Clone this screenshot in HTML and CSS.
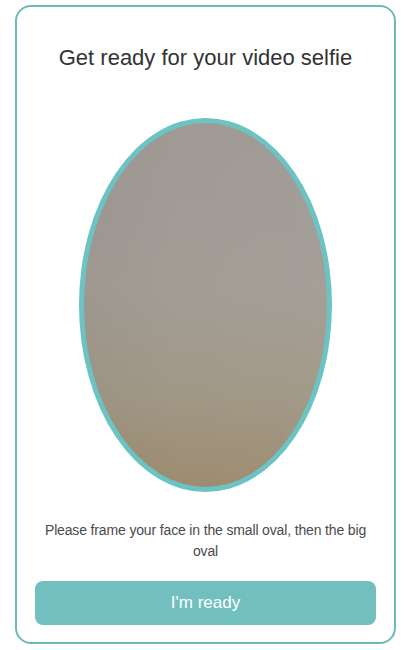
FILE: index.html
```html
<!DOCTYPE html>
<html lang="en">
<head>
<meta charset="utf-8">
<title>Video selfie</title>
<link rel="stylesheet" href="styles.css">
</head>
<body>
<main class="card">
  <h1 class="title">Get ready for your video selfie</h1>
  <div class="oval" aria-hidden="true"></div>
  <p class="hint">Please frame your face in the small oval, then the big oval</p>
  <button class="ready" type="button">I'm ready</button>
</main>
</body>
</html>
```

FILE: styles.css
```css
html, body {
  margin: 0;
  padding: 0;
  background: #ffffff;
}

body {
  font-family: "Liberation Sans", Arial, sans-serif;
  width: 414px;
  height: 650px;
  overflow: hidden;
}

.card {
  box-sizing: border-box;
  margin: 5px 18px 0 15px;
  height: 639px;
  border: 2px solid #6db9b9;
  border-radius: 16px;
  padding: 37px 18px 16px;
  display: flex;
  flex-direction: column;
  align-items: center;
}

.title {
  margin: 0;
  font-size: 22px;
  line-height: 28px;
  font-weight: 400;
  color: #333333;
  text-align: center;
}

.oval {
  box-sizing: border-box;
  margin-top: 46px;
  width: 253px;
  height: 374px;
  border-radius: 50%;
  border: 5px solid #6cc3c4;
  background:
    linear-gradient(90deg, rgba(0,0,0,0.03) 0%, rgba(0,0,0,0) 40%, rgba(255,255,255,0.02) 100%),
    linear-gradient(180deg, #a09a95 0%, #a39d96 45%, #a19886 75%, #9d8c70 100%);
}

.hint {
  margin: 28px 0 0;
  padding: 0;
  font-size: 14px;
  line-height: 21px;
  letter-spacing: -0.15px;
  color: #4a4a4a;
  text-align: center;
}

.ready {
  margin-top: 19px;
  width: 100%;
  height: 44px;
  border: none;
  border-radius: 8px;
  background: #72bfbf;
  color: #ffffff;
  font-family: "Liberation Sans", Arial, sans-serif;
  font-size: 17px;
  font-weight: 400;
  cursor: pointer;
}
```
